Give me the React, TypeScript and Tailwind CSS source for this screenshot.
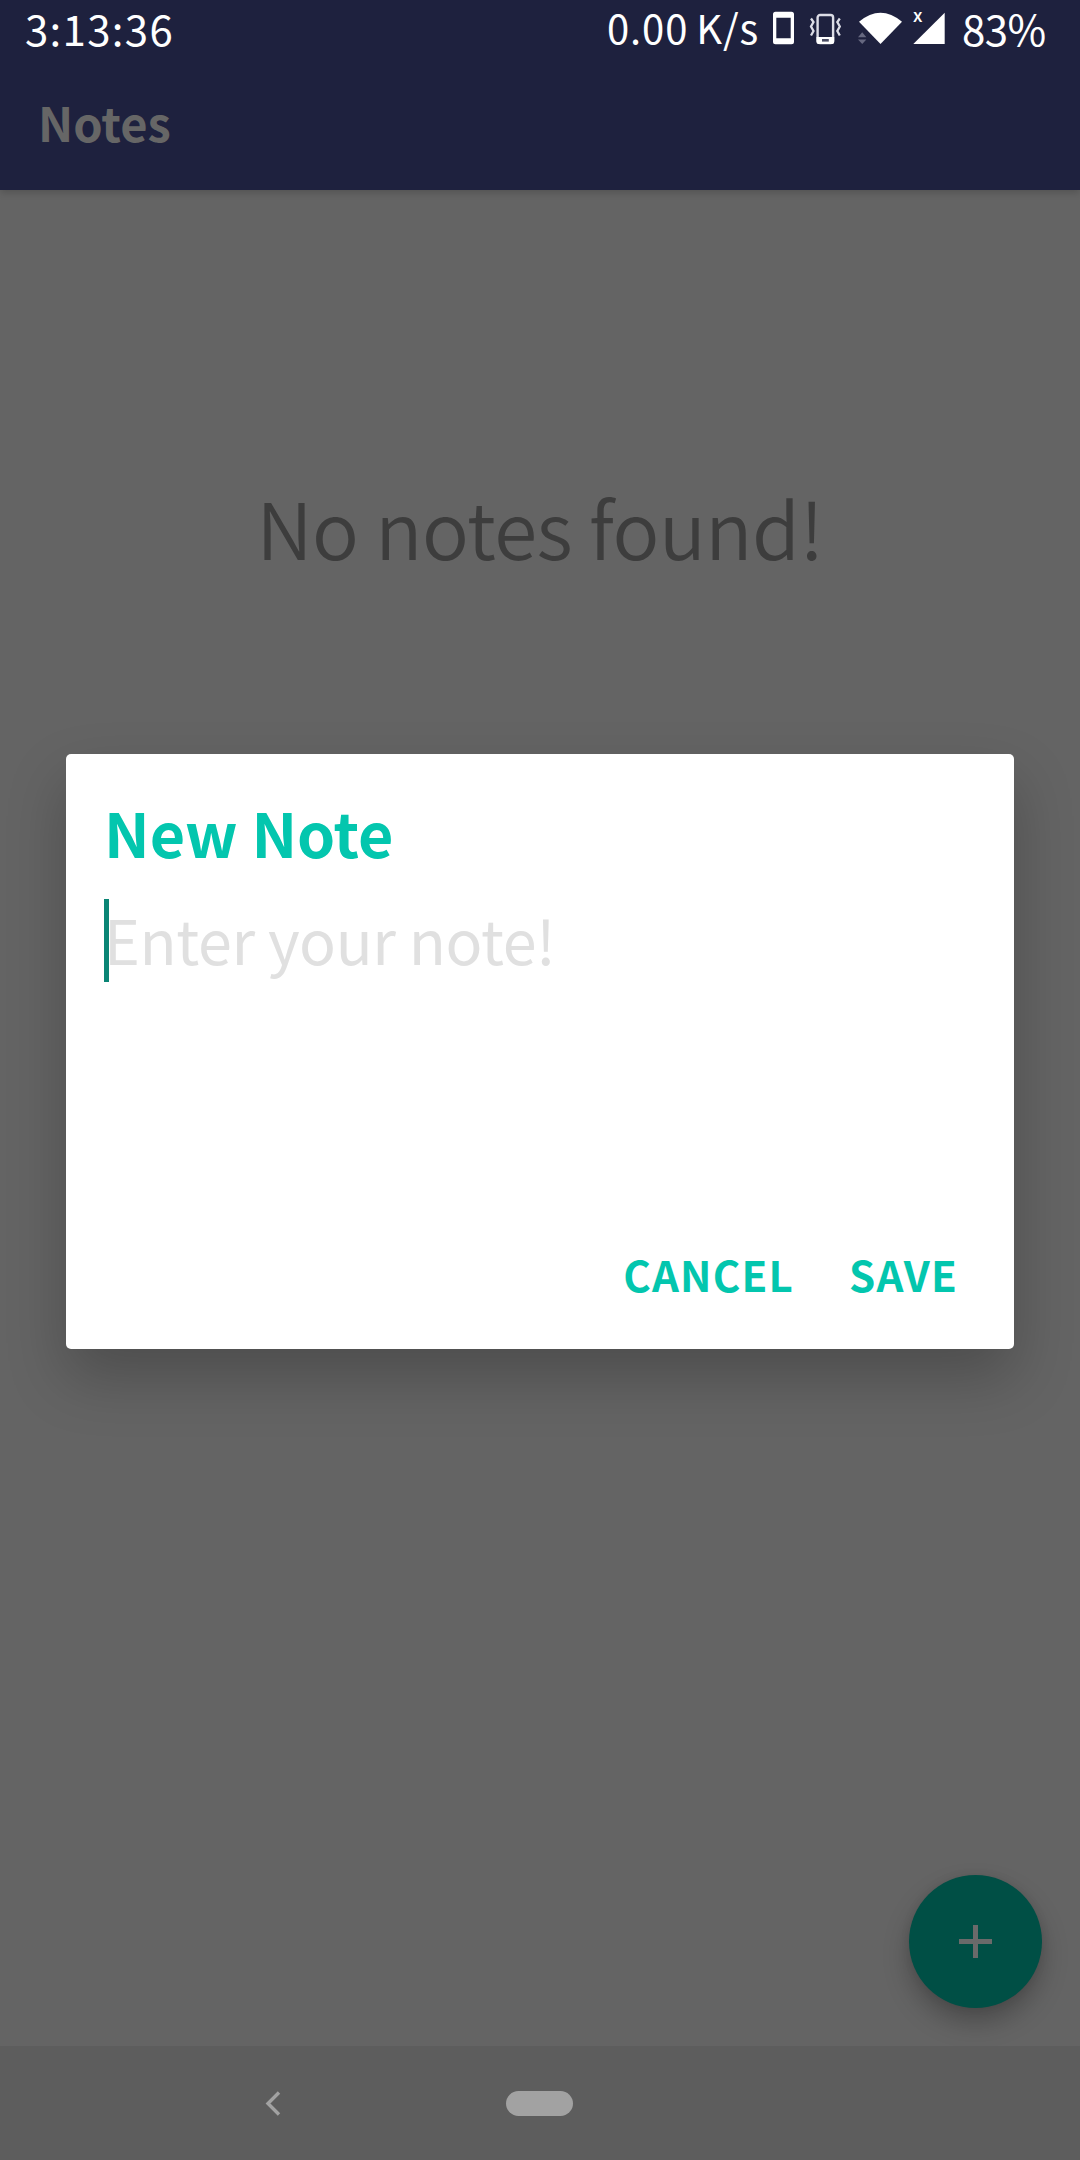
import type { ReactNode } from "react";

function StatusBar() {
  return (
    <div className="flex h-[62px] items-start whitespace-nowrap pl-[25px] text-white">
      <span className="w-[582px] text-[42px] leading-[56px] tracking-[1.3px]">3:13:36</span>
      <span className="w-[166px] text-[40px] leading-[54px] tracking-[0.9px] [word-spacing:-2px]">0.00 K/s</span>
      <svg className="mt-[11px] h-[34px] w-[22px] shrink-0" viewBox="0 0 22 34">
        <path
          fillRule="evenodd"
          fill="#fff"
          d="M2.500 0.800h16a2.500 2.500 0 0 1 2.500 2.500v27.500a2.500 2.500 0 0 1-2.500 2.500h-16a2.500 2.500 0 0 1-2.500-2.500v-27.500a2.500 2.500 0 0 1 2.500-2.500ZM3.300 6.700v20.600h14.400v-20.600Z"
        />
      </svg>
      <svg className="ml-[14px] mt-[13px] h-[32px] w-[34px] shrink-0" viewBox="0 0 34 32" fill="none" stroke="#dcdde6">
        <rect x="8.600" y="2" width="15.500" height="28" rx="2.500" strokeWidth="2.400" />
        <path d="M7.500 24h17.700v5a2 2 0 0 1-2 2H9.500a2 2 0 0 1-2-2Z" fill="#fff" stroke="none" />
        <rect x="13" y="26" width="6.800" height="2.600" fill="#4a4c63" stroke="none" />
        <path d="M2 5.500l2.500 3.500-2.500 4.500 2.500 4.500-2.500 4.500M30.800 5.500l-2.500 3.500 2.500 4.500-2.500 4.500 2.500 4.500" strokeWidth="2.300" />
      </svg>
      <svg className="ml-[14px] mt-[11px] h-[34px] w-[46px] shrink-0" viewBox="0 0 46 34">
        <path fill="#fff" d="M2 10.700Q23.500-7.300 45 10.700L23.500 33Z" />
        <path fill="#666880" d="M1 26.300L5.200 21.300l4.200 5ZM1 28.500L5.200 33l4.200-4.500Z" />
      </svg>
      <div className="relative ml-[9px] h-[46px] w-[35px] shrink-0">
        <span className="absolute left-[1px] top-[1px] text-[18px] font-medium leading-[26px]">x</span>
        <svg className="absolute left-0 top-[12px] h-[32px] w-[34px]" viewBox="0 0 34 32">
          <path fill="#fff" d="M1.300 32L32.700 0.700V32Z" />
        </svg>
      </div>
      <span className="ml-[15px] text-[42px] leading-[56px] tracking-[-0.5px]">83%</span>
    </div>
  );
}

function DialogButton({ children }: { children: ReactNode }) {
  return <button className="text-[42px] font-bold leading-[61px] tracking-[1.2px] text-[#03c6ae]">{children}</button>;
}

export default function App() {
  return (
    <div className="relative flex h-[2160px] w-[1080px] flex-col overflow-hidden bg-[#646464] font-['Noto_Sans_CJK_SC',sans-serif]">
      <header className="h-[190px] shrink-0 bg-[#1e213e] shadow-[0_2px_8px_rgba(0,0,0,0.2)]">
        <StatusBar />
        <h1 className="mt-[25px] pl-[38px] text-[47px] font-bold leading-[69px] text-[#666]">Notes</h1>
      </header>

      <main className="flex flex-1 flex-col justify-between">
        <p className="mt-[280px] text-center text-[78px] font-[350] leading-[113px] tracking-[-0.5px] text-[#3d3d3d]">
          No notes found!
        </p>
        <button className="mb-[38px] mr-[38px] flex h-[133px] w-[133px] items-center justify-center self-end rounded-full bg-[#004f45] shadow-[0_14px_26px_rgba(0,0,0,0.26),0_0_10px_rgba(0,0,0,0.08)]">
          <svg className="h-[33px] w-[33px]" viewBox="0 0 33 33" fill="#6a6a6a">
            <path d="M14 0h5v14h14v5H19v14h-5V19H0v-5h14Z" />
          </svg>
        </button>
      </main>

      <nav className="flex h-[114px] shrink-0 items-start bg-[#5d5d5d] pl-[265px] pt-[45px]">
        <svg className="h-[25px] w-[16px]" viewBox="0 0 16 25" fill="none" stroke="#a2a2a2" strokeWidth="3.400">
          <path d="M14 1.500L3 12.500L14 23.500" />
        </svg>
        <div className="ml-[225px] h-[25px] w-[67px] rounded-full bg-[#a2a2a2]" />
      </nav>

      <section
        role="dialog"
        className="absolute left-[66px] top-[754px] flex h-[595px] w-[948px] flex-col rounded-[5px] bg-white px-[38px] shadow-[0_28px_60px_rgba(0,0,0,0.23)]"
      >
        <h2 className="mt-[33px] text-[61px] font-bold leading-[89px] text-[#03c6ae]">New Note</h2>
        <div className="mt-[18px] flex h-[90px]">
          <span className="mt-[5px] h-[83px] w-[5px] shrink-0 bg-[#0a8575]" />
          <span className="-ml-[5px] text-[61px] leading-[89px] tracking-[-0.4px] text-[#e0e0e0]">Enter your note!</span>
        </div>
        <div className="mb-[45px] mt-auto flex justify-end gap-[55px] pr-[18px]">
          <DialogButton>CANCEL</DialogButton>
          <DialogButton>SAVE</DialogButton>
        </div>
      </section>
    </div>
  );
}
